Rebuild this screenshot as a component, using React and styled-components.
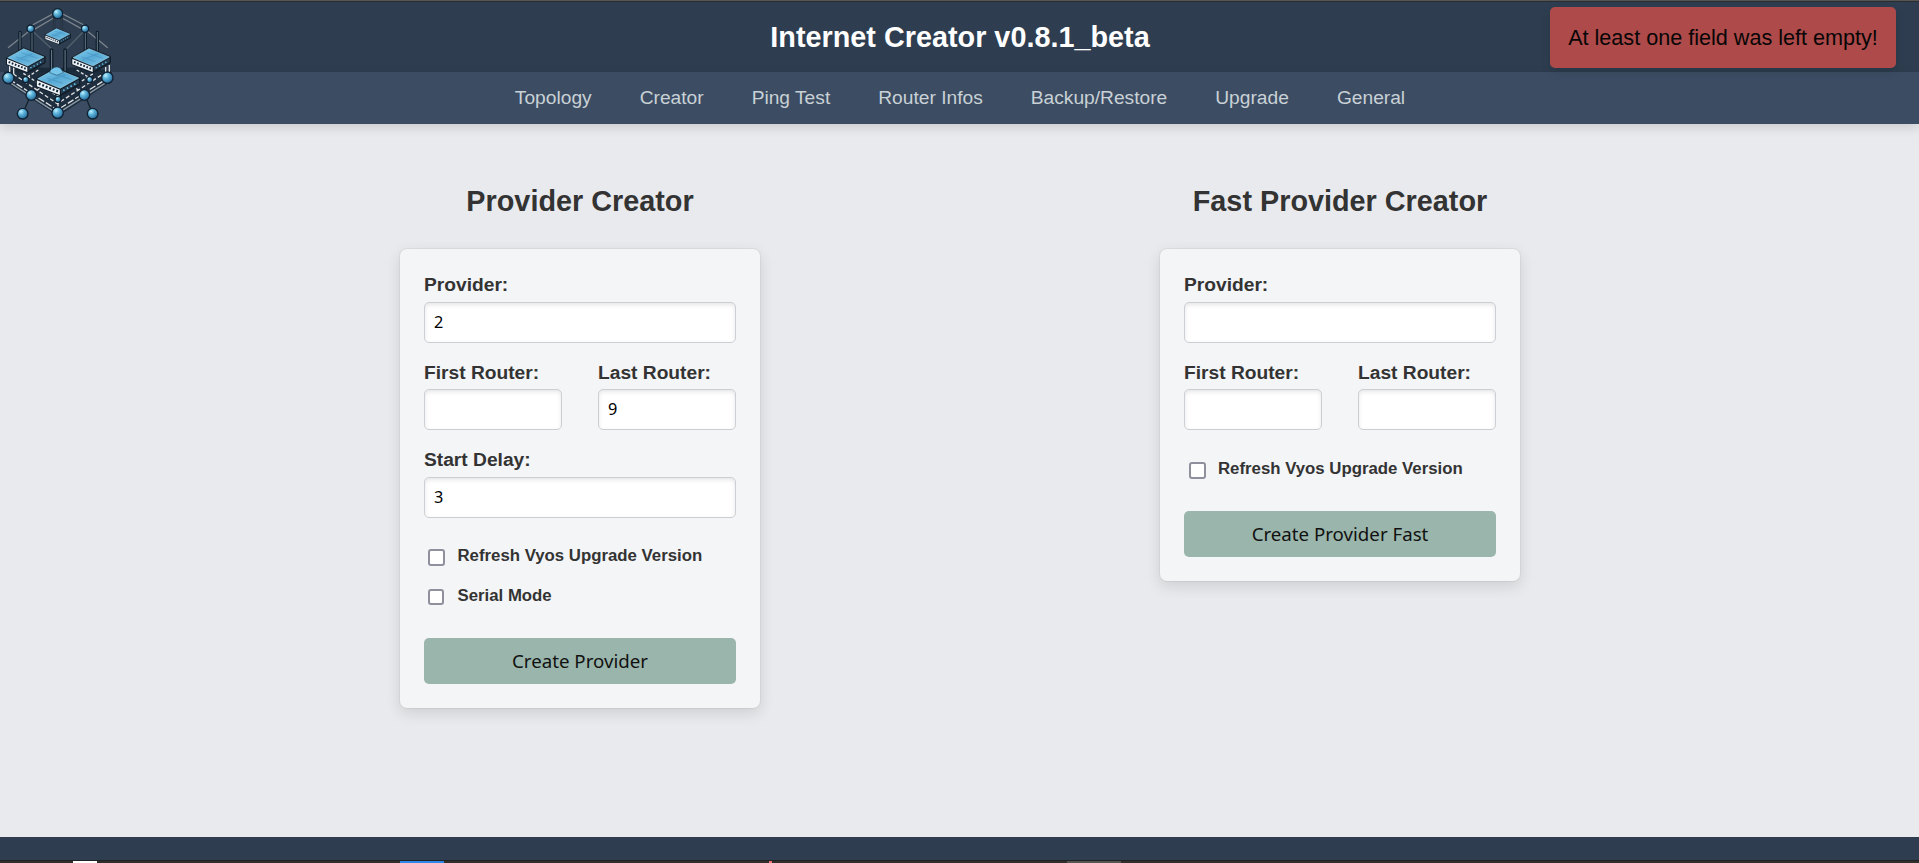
import React from "react";
import styled, { createGlobalStyle } from "styled-components";

const GlobalStyle = createGlobalStyle`
  * { box-sizing: border-box; }
  body {
    margin: 0;
    background: #e8eaed;
    font-family: "Liberation Sans", Arial, sans-serif;
    color: #333;
  }
`;

const Page = styled.div`
  height: 863px;
  display: flex;
  flex-direction: column;
  overflow: hidden;
  position: relative;
`;

const WindowEdge = styled.div`
  flex: none;
  height: 2px;
  background: #555;
  border-bottom: 1px solid #2b2e31;
`;

const Header = styled.header`
  flex: none;
  height: 70px;
  padding-left: 1px;
  display: flex;
  align-items: center;
  justify-content: center;
  background: #2e3e50;
`;

const Title = styled.h1`
  margin: 0;
  font-size: 28.8px;
  line-height: 33px;
  color: #fff;
`;

const Nav = styled.nav`
  flex: none;
  height: 52px;
  padding-left: 1px;
  display: flex;
  align-items: center;
  justify-content: center;
  gap: 48px;
  background: #3c4d63;
  box-shadow: 0 4px 10px rgba(0, 0, 0, 0.12);
`;

const NavLink = styled.a`
  font-size: 19.2px;
  line-height: 22px;
  color: #c9d1d6;
`;

const LogoSvg = styled.svg`
  position: absolute;
  left: 0;
  top: 0;
  width: 130px;
  height: 130px;
`;

const Toast = styled.div`
  position: absolute;
  top: 7px;
  right: 23px;
  width: 346px;
  height: 61px;
  display: flex;
  align-items: center;
  justify-content: center;
  border-radius: 5px;
  background: #ae4a4a;
  color: #060606;
  font-size: 21.6px;
  white-space: nowrap;
  box-shadow: 0 4px 10px rgba(0, 0, 0, 0.12);
`;

const Main = styled.main`
  flex: 1;
  display: flex;
  justify-content: center;
  align-items: flex-start;
  gap: 400px;
  padding: 61px 0 0 1px;
`;

const Column = styled.section`
  width: 360px;
`;

const Heading = styled.h2`
  margin: 0 0 31px;
  font-size: 28.8px;
  line-height: 33px;
  text-align: center;
  white-space: nowrap;
`;

const Card = styled.form`
  padding: 24px;
  border-radius: 7px;
  background: #f3f5f7;
  box-shadow: 0 0 0 1px rgba(0, 0, 0, 0.045), 0 5px 15px rgba(0, 0, 0, 0.12);
`;

const Fields = styled.div`
  display: flex;
  flex-direction: column;
  gap: 18px;
`;

const FieldRow = styled.div`
  display: grid;
  grid-template-columns: 1fr 1fr;
  gap: 36px;
`;

const FieldBox = styled.label`
  display: flex;
  flex-direction: column;
  gap: 5.5px;
  font-size: 19.2px;
  line-height: 23px;
  font-weight: bold;
  white-space: nowrap;
`;

const Input = styled.input`
  width: 100%;
  height: 41px;
  padding: 0 9px 1px;
  border: 1px solid #cbced3;
  border-radius: 5px;
  background: #fff;
  color: #000;
  font-family: "Noto Sans", sans-serif;
  font-size: 16.3px;
  box-shadow: inset 0 2px 4px rgba(0, 0, 0, 0.1);
  outline: none;
`;

const Checks = styled.div`
  display: flex;
  flex-direction: column;
  gap: 19.5px;
  padding: 28.5px 0 32.5px ${(p) => p.$indent}px;
`;

const CheckLabel = styled.label`
  height: 20px;
  display: flex;
  align-items: flex-start;
  gap: ${(p) => p.$gap}px;
  font-size: 16.8px;
  line-height: 19px;
  font-weight: bold;
  white-space: nowrap;
`;

const Checkbox = styled.input`
  appearance: none;
  flex: none;
  width: ${(p) => p.$size}px;
  height: ${(p) => p.$size}px;
  margin: 3px ${(p) => 17 - p.$size}px 0 0;
  border: 2px solid #8f8f9d;
  border-radius: 3px;
  background: #fff;
`;

const Submit = styled.button`
  display: block;
  width: 100%;
  height: 46px;
  padding: 0 0 2px;
  border: 0;
  border-radius: 5px;
  background: #9ab5ab;
  color: #111;
  font-family: "Noto Sans", sans-serif;
  font-size: 18.7px;
`;

const Footer = styled.footer`
  flex: none;
  height: 23px;
  background: #2e3e50;
`;

const Taskbar = styled.div`
  flex: none;
  height: 3px;
  border-top: 1px solid #1f2123;
  background: linear-gradient(
    90deg,
    #322e2e 73px, #fff 73px, #fff 97px, #322e2e 97px,
    #322e2e 400px, #2e86e8 400px, #2e86e8 444px, #322e2e 444px,
    #322e2e 769px, #ec7474 769px, #ec7474 772px, #322e2e 772px,
    #322e2e 1067px, #575454 1067px, #575454 1121px, #322e2e 1121px
  );
`;

function Router({ x, y, s = 1 }) {
  return (
    <g transform={`translate(${x} ${y}) scale(${s})`}>
      <path d="M-18 -15V-72M18 -15V-72" stroke="#101c28" strokeWidth="10" strokeLinecap="round" />
      <path d="M-18 -15V-72M18 -15V-72" stroke="#607789" strokeWidth="3" strokeLinecap="round" />
      <path d="M-57 5L-7 -24L56 2V18L5 47L-57 23Z" fill="#101c28" stroke="#101c28" strokeWidth="6" strokeLinejoin="round" />
      <path d="M-55 4L-7 -23L54 2L5 29Z" fill="url(#top)" stroke="#a9e2f7" strokeWidth="1.5" />
      <path d="M-57 8L4 33V47L-57 24Z" fill="#eef4f7" />
      <path d="M7 32L55 6V17L7 44Z" fill="#263d51" />
      <path d="M-52 17L1 38" stroke="#142638" strokeWidth="6" strokeDasharray="5 5" />
      <path d="M13 35L51 14" stroke="#66c8ef" strokeWidth="4" strokeDasharray="4 7" />
      <path d="M-30 2L12 16M-14 -11L35 6M-27 10L19 -8" stroke="#347fae" strokeWidth="3" opacity=".35" />
    </g>
  );
}

function Node({ x, y, r = 15 }) {
  return <circle cx={x} cy={y} r={r} fill="url(#ball)" stroke="#112131" strokeWidth="4" />;
}

function Logo() {
  return (
    <LogoSvg viewBox="0 0 390 390">
      <defs>
        <linearGradient id="top" x1="0" y1="0" x2="1" y2="1">
          <stop offset="0" stopColor="#86d3f2" />
          <stop offset=".5" stopColor="#57a9d5" />
          <stop offset="1" stopColor="#86cbe9" />
        </linearGradient>
        <radialGradient id="ball" cx=".35" cy=".3" r=".75">
          <stop offset="0" stopColor="#c5f0fb" />
          <stop offset=".35" stopColor="#62b9df" />
          <stop offset="1" stopColor="#1f6496" />
        </radialGradient>
      </defs>
      <g fill="none" stroke="#7b838b" strokeWidth="4">
        <path d="M166 38L92 78M180 38L258 78M166 51L103 88M181 51L248 88M92 90L24 143M258 90L323 143" />
        <path d="M100 95L155 146M250 95L200 146" stroke="#53606d" />
      </g>
      <path d="M12 216L78 200L173 205L270 200L336 216L332 246L174 349L16 246Z" fill="#142433" opacity=".75" />
      <g fill="none" stroke="#dfe2e3" strokeWidth="4">
        <path d="M28 238L172 330L318 238" strokeDasharray="20 6" />
        <path d="M30 248L172 341L318 248" stroke="#8b98a3" />
        <path d="M40 222L172 311L309 222" strokeDasharray="12 7" />
        <path d="M70 220L174 289L281 220M115 210L84 230M230 210L278 239M131 257L94 282M216 257L253 282" strokeDasharray="9 6" />
        <path d="M29 195V222M41 201V226M317 201V226M328 195V222M174 280V326" />
      </g>
      <path d="M92 286L68 341M255 286L278 341" stroke="#14222f" strokeWidth="4" />
      <Router x={174} y={101} s={0.66} />
      <Router x={78} y={169} />
      <Router x={274} y={169} />
      <Router x={175} y={232} s={1.13} />
      <path d="M149 218Q150 207 157 206Q162 200 172 201Q182 202 186 211L190 218L171 226Z" fill="#74c5e9" stroke="#18384f" strokeWidth="1.5" />
      <Node x={173} y={41} />
      <Node x={92} y={86} r={11} />
      <Node x={255} y={86} r={11} />
      <Node x={25} y={234} r={17} />
      <Node x={322} y={233} r={17} />
      <Node x={94} y={285} r={16} />
      <Node x={253} y={285} r={16} />
      <Node x={77} y={239} r={9} />
      <Node x={269} y={239} r={9} />
      <Node x={174} y={298} r={9} />
      <Node x={173} y={338} r={17} />
      <Node x={68} y={341} r={16} />
      <Node x={278} y={341} r={16} />
    </LogoSvg>
  );
}

function Field({ label, value = "" }) {
  return (
    <FieldBox>
      {label}
      <Input type="text" defaultValue={value} />
    </FieldBox>
  );
}

function Check({ label, size = 17, gap = 12 }) {
  return (
    <CheckLabel $gap={gap}>
      <Checkbox type="checkbox" $size={size} />
      {label}
    </CheckLabel>
  );
}

const LINKS = ["Topology", "Creator", "Ping Test", "Router Infos", "Backup/Restore", "Upgrade", "General"];

export default function App() {
  return (
    <Page>
      <GlobalStyle />
      <WindowEdge />
      <Header>
        <Title>Internet Creator v0.8.1_beta</Title>
      </Header>
      <Nav>
        {LINKS.map((link) => (
          <NavLink key={link}>{link}</NavLink>
        ))}
      </Nav>
      <Main>
        <Column>
          <Heading>Provider Creator</Heading>
          <Card>
            <Fields>
              <Field label="Provider:" value="2" />
              <FieldRow>
                <Field label="First Router:" />
                <Field label="Last Router:" value="9" />
              </FieldRow>
              <Field label="Start Delay:" value="3" />
            </Fields>
            <Checks $indent={4}>
              <Check label="Refresh Vyos Upgrade Version" gap={12.5} />
              <Check label="Serial Mode" size={16} gap={12.5} />
            </Checks>
            <Submit type="button">Create Provider</Submit>
          </Card>
        </Column>
        <Column>
          <Heading>Fast Provider Creator</Heading>
          <Card>
            <Fields>
              <Field label="Provider:" />
              <FieldRow>
                <Field label="First Router:" />
                <Field label="Last Router:" />
              </FieldRow>
            </Fields>
            <Checks $indent={5}>
              <Check label="Refresh Vyos Upgrade Version" />
            </Checks>
            <Submit type="button">Create Provider Fast</Submit>
          </Card>
        </Column>
      </Main>
      <Footer />
      <Taskbar />
      <Logo />
      <Toast>At least one field was left empty!</Toast>
    </Page>
  );
}
